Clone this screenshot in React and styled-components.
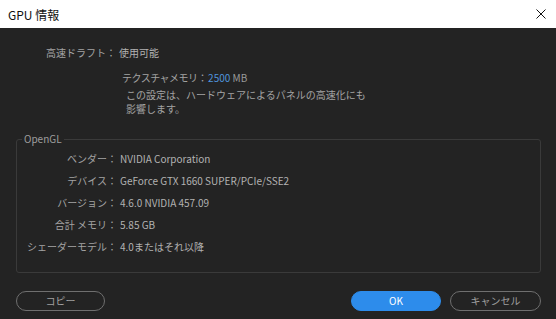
import React from 'react'
import styled, { createGlobalStyle } from 'styled-components'

const GlobalStyle = createGlobalStyle`
  html, body {
    margin: 0;
    background: #232323;
  }
  * { box-sizing: border-box; }
`

const Dialog = styled.div`
  width: 556px;
  height: 319px;
  display: flex;
  flex-direction: column;
  background: #232323;
  font-family: "Noto Sans CJK JP", "Noto Sans", sans-serif;
  font-size: 10px;
  color: #a3a3a3;
  overflow: hidden;
`

const TitleBar = styled.div`
  height: 28px;
  flex: none;
  background: #fff;
  display: flex;
  align-items: center;
  justify-content: space-between;
  padding: 0 9px 0 8px;
  color: #111;
  font-size: 12px;
`

const CloseButton = styled.button`
  width: 12px;
  height: 12px;
  padding: 0;
  border: none;
  background: none;
  display: flex;
  align-items: center;
  justify-content: center;
`

const Body = styled.div`
  flex: 1;
  display: flex;
  flex-direction: column;
  padding: 17px 15px 0 16px;
`

const Grid = styled.div`
  display: grid;
  grid-template-columns: 100px auto;
  column-gap: 3px;
  align-content: start;
`

const Label = styled.div`
  text-align: right;
  line-height: ${p => p.$lh || 16}px;
  white-space: nowrap;
`

const Value = styled.div`
  line-height: ${p => p.$lh || 16}px;
  color: #b2b2b2;
  white-space: nowrap;
`

const TextureBlock = styled.div`
  margin: 9px 0 0 106px;
  display: flex;
  flex-direction: column;
`

const TextureRow = styled.div`
  display: flex;
  align-items: baseline;
  line-height: 16px;
  gap: 1px;
  white-space: nowrap;
`

const TextureLabel = styled.span`
  letter-spacing: -0.5px;
`

const Blue = styled.span`
  color: #4f94dc;
`

const Unit = styled.span`
  color: #9a9a9a;
`

const Note = styled.div`
  margin: 2px 0 0 4px;
  line-height: 14px;
`

const Group = styled.fieldset`
  margin: 16px 0 0 0;
  padding: 2px 0 14px 0;
  border: 1px solid #3a3a3a;
  border-radius: 3px;
  min-width: 0;
`

const Legend = styled.legend`
  margin-left: 5px;
  padding: 0 2px;
  line-height: 14px;
  color: #9e9e9e;
`

const Footer = styled.div`
  margin-top: 18px;
  display: flex;
  align-items: center;
  gap: 9px;
`

const Button = styled.button`
  width: ${p => p.$w || 90}px;
  height: 20px;
  border-radius: 10px;
  border: 1px solid ${p => (p.$primary ? '#2d8ceb' : '#6f6f6f')};
  background: ${p => (p.$primary ? '#2d8ceb' : 'transparent')};
  color: ${p => (p.$primary ? '#fff' : '#a0a0a0')};
  font-family: inherit;
  font-size: 10px;
  padding: 0;
  line-height: 18px;
  margin-left: ${p => (p.$push ? 'auto' : '0')};
`

const rows = [
  ['ベンダー：', 'NVIDIA Corporation'],
  ['デバイス：', 'GeForce GTX 1660 SUPER/PCIe/SSE2'],
  ['バージョン：', '4.6.0 NVIDIA 457.09'],
  ['合計 メモリ：', '5.85 GB'],
  ['シェーダーモデル：', '4.0またはそれ以降'],
]

export default function App() {
  return (
    <>
      <GlobalStyle />
      <Dialog>
        <TitleBar>
          <span>GPU 情報</span>
          <CloseButton aria-label="閉じる">
            <svg width="10" height="10" viewBox="0 0 10 10">
              <path d="M0.5 0.5 L9.5 9.5 M9.5 0.5 L0.5 9.5" stroke="#111" strokeWidth="1" />
            </svg>
          </CloseButton>
        </TitleBar>
        <Body>
          <Grid>
            <Label>高速ドラフト：</Label>
            <Value>使用可能</Value>
          </Grid>
          <TextureBlock>
            <TextureRow>
              <TextureLabel>テクスチャメモリ：</TextureLabel>
              <span><Blue>2500</Blue> <Unit>MB</Unit></span>
            </TextureRow>
            <Note>
              この設定は、ハードウェアによるパネルの高速化にも<br />
              影響します。
            </Note>
          </TextureBlock>
          <Group>
            <Legend>OpenGL</Legend>
            <Grid>
              {rows.map(([l, v]) => (
                <React.Fragment key={l}>
                  <Label $lh={22}>{l}</Label>
                  <Value $lh={22}>{v}</Value>
                </React.Fragment>
              ))}
            </Grid>
          </Group>
          <Footer>
            <Button $w={89}>コピー</Button>
            <Button $primary $push $w={90}>OK</Button>
            <Button $w={91}>キャンセル</Button>
          </Footer>
        </Body>
      </Dialog>
    </>
  )
}
